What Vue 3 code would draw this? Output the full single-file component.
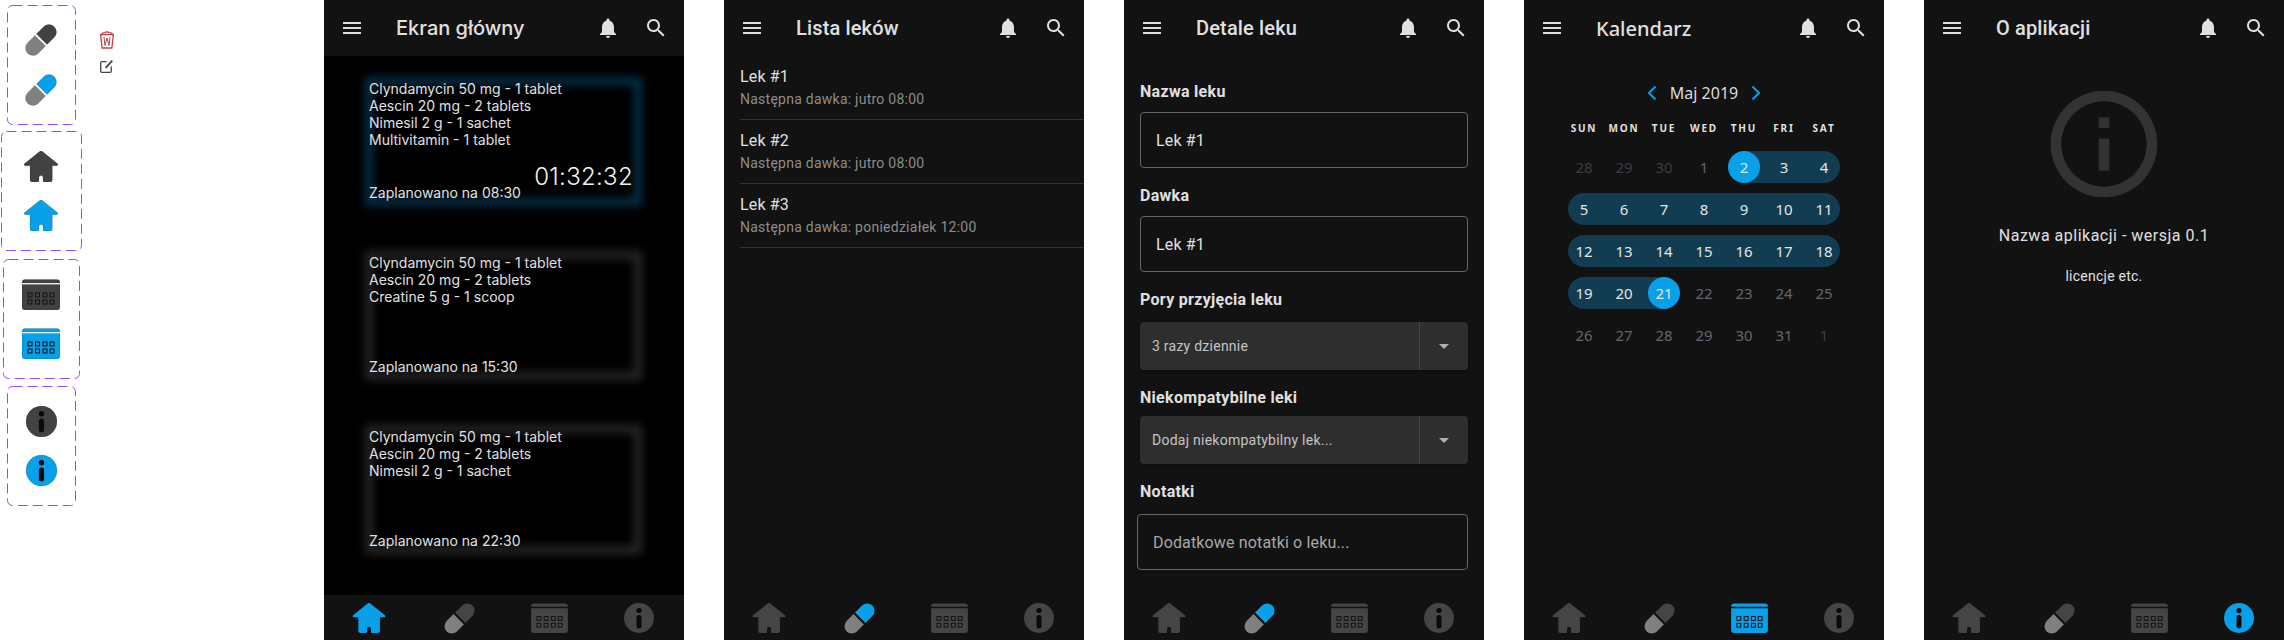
<script setup>
const palette = [
  { icon: 'pill', size: [32, 32] },
  { icon: 'home', size: [34, 31] },
  { icon: 'cal', size: [38, 31] },
  { icon: 'info', size: [31, 31] }
]

const navIcons = [
  { icon: 'home', w: 34, h: 30 },
  { icon: 'pill', w: 31, h: 31 },
  { icon: 'cal', w: 37, h: 30 },
  { icon: 'info', w: 30, h: 30 }
]

const screens = [
  { key: 'home', title: 'Ekran główny', nav: 0 },
  { key: 'list', title: 'Lista leków', nav: 1 },
  { key: 'details', title: 'Detale leku', nav: 1 },
  { key: 'calendar', title: 'Kalendarz', nav: 2 },
  { key: 'about', title: 'O aplikacji', nav: 3 }
]

const doses = [
  { lines: ['Clyndamycin 50 mg - 1 tablet', 'Aescin 20 mg - 2 tablets', 'Nimesil 2 g - 1 sachet', 'Multivitamin - 1 tablet'], time: '08:30', timer: '01:32:32' },
  { lines: ['Clyndamycin 50 mg - 1 tablet', 'Aescin 20 mg - 2 tablets', 'Creatine 5 g - 1 scoop'], time: '15:30' },
  { lines: ['Clyndamycin 50 mg - 1 tablet', 'Aescin 20 mg - 2 tablets', 'Nimesil 2 g - 1 sachet'], time: '22:30' }
]

const meds = [
  { name: 'Lek #1', next: 'Następna dawka: jutro 08:00' },
  { name: 'Lek #2', next: 'Następna dawka: jutro 08:00' },
  { name: 'Lek #3', next: 'Następna dawka: poniedziałek 12:00' }
]

const weekdays = ['SUN', 'MON', 'TUE', 'WED', 'THU', 'FRI', 'SAT']

const labels = [28, 29, 30, 1, 2, 3, 4, 5, 6, 7, 8, 9, 10, 11, 12, 13, 14, 15, 16, 17, 18, 19, 20, 21, 22, 23, 24, 25, 26, 27, 28, 29, 30, 31, 1]
const days = labels.map((n, i) => ({
  n,
  faint: i < 3 || i === 34,
  dim: i === 3 || (i > 23 && i < 34),
  band: i >= 4 && i <= 23,
  first: i % 7 === 0,
  last: i % 7 === 6,
  from: i === 4,
  to: i === 23,
  sel: i === 4 || i === 23
}))
</script>

<template>
  <div class="page">
    <svg class="defs" width="0" height="0">
      <symbol id="home" viewBox="0 0 34 31">
        <path d="M15.600.6a2 2 0 0 1 2.800 0L33.400 12.600c1 .8.5 2.200-.8 2.200H28.300V29a2 2 0 0 1-2 2H20a1 1 0 0 1-1-1v-3.500a2 2 0 0 0-4 0V30a1 1 0 0 1-1 1H8a2 2 0 0 1-2-2V14.800H1.400c-1.300 0-1.800-1.400-.8-2.200z" />
      </symbol>
      <symbol id="pill" viewBox="0 0 32 32">
        <g transform="rotate(-45 16 16)">
          <path d="M14.900 8.500H4.700a7.500 7.500 0 0 0 0 15h10.200z" fill="#808080" />
          <path d="M17.100 8.500h10.200a7.500 7.500 0 0 1 0 15H17.100z" />
        </g>
      </symbol>
      <symbol id="cal" viewBox="0 0 38 31">
        <path d="M0 4V3.500a3 3 0 0 1 3-3h32a3 3 0 0 1 3 3V4z" />
        <path d="M0 5.500h38V28a3 3 0 0 1-3 3H3a3 3 0 0 1-3-3z" />
        <g fill="none" stroke="#111" stroke-width="1">
          <rect x="6" y="14" width="4" height="4" />
          <rect x="13.500" y="14" width="4" height="4" />
          <rect x="21" y="14" width="4" height="4" />
          <rect x="28" y="14" width="4" height="4" />
          <rect x="6" y="21" width="4" height="4" />
          <rect x="13.500" y="21" width="4" height="4" />
          <rect x="21" y="21" width="4" height="4" />
          <rect x="28" y="21" width="4" height="4" />
        </g>
      </symbol>
      <symbol id="info" viewBox="0 0 30 30">
        <circle cx="15" cy="15" r="15" />
        <g fill="#0a0a0a" stroke="none">
          <circle cx="15" cy="7.500" r="2.600" />
          <rect x="12.500" y="12" width="5" height="13.500" rx="2.500" />
        </g>
      </symbol>
    </svg>

    <aside class="palette">
      <div v-for="p in palette" :key="p.icon" class="variants">
        <svg class="dash"><rect x="0.5" y="0.5" rx="5" /></svg>
        <svg class="pal-icon" :width="p.size[0]" :height="p.size[1]" fill="#424242"><use :href="'#' + p.icon" /></svg>
        <svg class="pal-icon" :width="p.size[0]" :height="p.size[1]" fill="#08a0e9"><use :href="'#' + p.icon" /></svg>
      </div>
    </aside>

    <div class="tools">
      <svg width="14" height="18" viewBox="0 0 14 18" fill="none" stroke="#c23f45" stroke-width="1.300">
        <path d="M.6 3.600h12.800L11.900 17H2.100z" />
        <path d="M1.500 3.400C2 1.900 4 1.700 5 1.700 5.500.6 8.500.6 9 1.700c1 0 3 .2 3.500 1.700" />
        <path d="M4 6l1 8.500M10 6l-1 8.500M5 14.500L7 7l2 7.500" stroke-width="1" />
      </svg>
      <svg width="13" height="13" viewBox="0 0 13 13" fill="none" stroke="#444" stroke-width="1.300">
        <path d="M6.500 1.700H2a1.300 1.300 0 0 0-1.300 1.300v8A1.300 1.300 0 0 0 2 12.300h8a1.300 1.300 0 0 0 1.300-1.300V6.500" />
        <path d="M5.500 7.800L12.300.7" stroke-width="1.800" />
      </svg>
    </div>

    <div class="phones">
      <section v-for="s in screens" :key="s.key" class="phone" :class="s.key">
        <header class="appbar">
          <svg class="icon" viewBox="0 0 24 24"><path d="M3 18h18v-2H3v2zm0-5h18v-2H3v2zm0-7v2h18V6H3z" /></svg>
          <h1>{{ s.title }}</h1>
          <svg class="icon" viewBox="0 0 24 24"><path d="M12 22c1.100 0 2-.9 2-2h-4c0 1.100.9 2 2 2zm6-6v-5c0-3.070-1.630-5.640-4.500-6.320V4c0-.83-.67-1.500-1.500-1.500s-1.500.67-1.500 1.500v.68C7.640 5.360 6 7.920 6 11v5l-2 2v1h16v-1l-2-2z" /></svg>
          <svg class="icon" viewBox="0 0 24 24"><path d="M15.500 14h-.79l-.28-.27C15.410 12.590 16 11.110 16 9.500 16 5.910 13.090 3 9.500 3S3 5.910 3 9.500 5.910 16 9.500 16c1.610 0 3.090-.59 4.230-1.570l.27.28v.79l5 4.990L20.490 19l-4.990-5zm-6 0C7.010 14 5 11.990 5 9.500S7.010 5 9.500 5 14 7.010 14 9.500 11.990 14 9.500 14z" /></svg>
        </header>

        <main class="content">
          <template v-if="s.key === 'home'">
            <article v-for="(d, i) in doses" :key="d.time" class="dose" :class="{ next: i === 0 }">
              <div>
                <p v-for="l in d.lines" :key="l">{{ l }}</p>
              </div>
              <div class="dose-foot">
                <p>Zaplanowano na {{ d.time }}</p>
                <span v-if="d.timer" class="timer">{{ d.timer }}</span>
              </div>
            </article>
          </template>

          <template v-else-if="s.key === 'list'">
            <div v-for="m in meds" :key="m.name" class="med">
              <div class="med-name">{{ m.name }}</div>
              <div class="med-next">{{ m.next }}</div>
            </div>
          </template>

          <template v-else-if="s.key === 'details'">
            <label class="lbl l1">Nazwa leku</label>
            <div class="field">Lek #1</div>
            <label class="lbl l1">Dawka</label>
            <div class="field">Lek #1</div>
            <label class="lbl l2">Pory przyjęcia leku</label>
            <div class="select">
              <span>3 razy dziennie</span>
              <i><svg width="24" height="24" viewBox="0 0 24 24"><path d="M7 10l5 5 5-5z" /></svg></i>
            </div>
            <label class="lbl l3">Niekompatybilne leki</label>
            <div class="select">
              <span>Dodaj niekompatybilny lek...</span>
              <i><svg width="24" height="24" viewBox="0 0 24 24"><path d="M7 10l5 5 5-5z" /></svg></i>
            </div>
            <label class="lbl l4">Notatki</label>
            <div class="field notes">Dodatkowe notatki o leku...</div>
          </template>

          <template v-else-if="s.key === 'calendar'">
            <div class="month">
              <svg width="12" height="16" viewBox="0 0 12 16" fill="none" stroke="#08a0e9" stroke-width="2"><path d="M9.500 1.500L3 8l6.500 6.500" /></svg>
              <span>Maj 2019</span>
              <svg width="12" height="16" viewBox="0 0 12 16" fill="none" stroke="#08a0e9" stroke-width="2"><path d="M2.500 1.500L9 8l-6.500 6.500" /></svg>
            </div>
            <div class="wd-row">
              <div v-for="w in weekdays" :key="w" class="wd">{{ w }}</div>
            </div>
            <div class="cal-grid">
              <div
                v-for="(d, i) in days"
                :key="i"
                class="day"
                :class="{ faint: d.faint, dim: d.dim, band: d.band, first: d.first, last: d.last, from: d.from, to: d.to, sel: d.sel }"
              >
                <span>{{ d.n }}</span>
              </div>
            </div>
          </template>

          <template v-else>
            <svg class="big-info" viewBox="0 0 24 24"><path d="M11 7h2v2h-2zm0 4h2v6h-2zm1-9C6.480 2 2 6.480 2 12s4.480 10 10 10 10-4.480 10-10S17.520 2 12 2zm0 18c-4.410 0-8-3.590-8-8s3.590-8 8-8 8 3.590 8 8-3.590 8-8 8z" /></svg>
            <p class="app-name">Nazwa aplikacji - wersja 0.1</p>
            <p class="app-lic">licencje etc.</p>
          </template>
        </main>

        <nav class="tabs">
          <span v-for="(n, i) in navIcons" :key="n.icon" class="tab">
            <svg :width="n.w" :height="n.h" :fill="i === s.nav ? '#08a0e9' : '#454545'"><use :href="'#' + n.icon" /></svg>
          </span>
        </nav>
      </section>
    </div>
  </div>
</template>

<style>
html, body { background: #fff; }
</style>

<style scoped>
.page {
  display: flex;
  width: 2284px;
  height: 640px;
  overflow: hidden;
  background: #fff;
  font-family: Roboto, sans-serif;
}
.defs { position: absolute; }

/* component set column on the left */
.palette {
  width: 82px;
  flex: none;
  display: flex;
  flex-direction: column;
  align-items: center;
  padding-top: 5px;
}
.variants {
  position: relative;
  width: 69px;
  height: 120px;
  display: flex;
  flex-direction: column;
  align-items: center;
  justify-content: center;
  gap: 18px;
  margin-bottom: 7px;
}
.variants:nth-child(1) { margin-bottom: 6px; }
.variants:nth-child(2) { width: 81px; margin-bottom: 8px; }
.variants:nth-child(3) { width: 77px; }
.dash { position: absolute; inset: 0; width: 100%; height: 100%; }
.dash rect {
  width: calc(100% - 1px);
  height: calc(100% - 1px);
  fill: none;
  stroke: #9747ff;
  stroke-dasharray: 10 5;
}
.pal-icon { stroke: rgba(0, 0, 0, 0.3); stroke-width: 0.5; overflow: visible; }

.tools {
  width: 14px;
  margin: 31px 210px 0 18px;
  display: flex;
  flex-direction: column;
  gap: 11px;
  align-items: flex-start;
}

.phones { display: flex; gap: 40px; }
.phone {
  width: 360px;
  height: 640px;
  display: flex;
  flex-direction: column;
  background: #121212;
  color: #e0e0e0;
}

.appbar {
  height: 56px;
  flex: none;
  display: flex;
  align-items: center;
  gap: 24px;
  padding: 0 16px;
}
.appbar h1 {
  flex: 1;
  margin: 0 0 0 8px;
  font-size: 20px;
  font-weight: 500;
  letter-spacing: 0.15px;
}
.icon { width: 24px; height: 24px; fill: #e0e0e0; flex: none; }
.home h1 { font-family: Inter, sans-serif; letter-spacing: 0; }
.calendar h1 { font-family: "Noto Sans", sans-serif; letter-spacing: 0; }

.content { flex: 1; min-height: 0; }

.home .content {
  background: #000;
  padding: 24px 0 0 45px;
  font-family: Inter, sans-serif;
}
.dose {
  position: relative;
  width: 269px;
  height: 122px;
  box-sizing: border-box;
  margin-bottom: 52px;
  padding-bottom: 1px;
  display: flex;
  flex-direction: column;
  justify-content: space-between;
  font-size: 14px;
  line-height: 17px;
  --glow: #272727;
}
.dose.next { --glow: #063049; }
.dose::before {
  content: "";
  position: absolute;
  inset: -3px -4px -4px -4px;
  border: 8px solid var(--glow);
  filter: blur(4px);
}
.dose > * { position: relative; }
.dose p { margin: 0; white-space: nowrap; }
.dose-foot {
  display: flex;
  justify-content: space-between;
  align-items: flex-end;
  padding-right: 5px;
}
.timer {
  font-size: 24px;
  line-height: 29px;
  font-weight: 300;
  letter-spacing: 0.3px;
  margin-bottom: 10px;
  color: #f2f2f2;
}

.med {
  height: 64px;
  margin-left: 16px;
  border-bottom: 1px solid #333;
  padding-top: 9px;
  box-sizing: border-box;
}
.med-name { font-size: 16px; line-height: 24px; letter-spacing: 0.15px; }
.med-next { font-size: 14px; line-height: 20px; letter-spacing: 0.25px; color: #8c8c8c; }

.details .content { padding: 24px 16px 0; }
.lbl {
  display: block;
  font-size: 16px;
  line-height: 24px;
  font-weight: 700;
  letter-spacing: 0.3px;
}
.l1 { margin: 16px 0 8px; }
.lbl:first-child { margin-top: 0; }
.l2 { margin: 16px 0 10px; }
.l3 { margin: 16px 0 6px; }
.l4 { margin: 16px 0 10px; }
.field {
  height: 56px;
  box-sizing: border-box;
  border: 1px solid #666;
  border-radius: 4px;
  padding-left: 15px;
  display: flex;
  align-items: center;
  font-size: 16px;
  letter-spacing: 0.15px;
}
.notes {
  margin-left: -3px;
  color: #a8a8a8;
}
.select {
  height: 48px;
  display: flex;
  align-items: stretch;
  background: #2e2e2e;
  border-radius: 4px;
  box-shadow: 0 1px 3px rgba(0, 0, 0, 0.4);
  font-size: 14px;
  letter-spacing: 0.25px;
  color: #c4c4c4;
}
.select span { flex: 1; padding-left: 12px; line-height: 48px; }
.select i {
  width: 48px;
  border-left: 1px solid #444;
  display: flex;
  align-items: center;
  justify-content: center;
}
.select svg { fill: #b0b0b0; }

.calendar .content {
  font-family: "Noto Sans", sans-serif;
  padding-top: 24px;
}
.month {
  height: 26px;
  display: flex;
  align-items: center;
  justify-content: center;
  gap: 12px;
  font-size: 16px;
  color: #dcdcdc;
}
.wd-row, .cal-grid {
  width: 280px;
  margin: 0 auto;
  display: grid;
  grid-template-columns: repeat(7, 40px);
}
.wd-row { margin-top: 15px; }
.wd {
  text-align: center;
  font-size: 10px;
  line-height: 14px;
  font-weight: 700;
  letter-spacing: 1.8px;
  color: #e0e0e0;
}
.cal-grid {
  margin-top: 16px;
  grid-auto-rows: 32px;
  row-gap: 10px;
}
.day {
  position: relative;
  display: flex;
  align-items: center;
  justify-content: center;
  font-size: 15px;
  color: #e6e6e6;
}
.day span { position: relative; z-index: 2; }
.day.faint { color: #3e3c44; }
.day.dim { color: #66646c; }
.day.band::before {
  content: "";
  position: absolute;
  inset: 0;
  background: #113c52;
}
.day.band.first::before { left: 4px; border-radius: 16px 0 0 16px; }
.day.band.last::before { right: 4px; border-radius: 0 16px 16px 0; }
.day.band.from::before { left: 50%; }
.day.band.to::before { right: 50%; }
.day.sel::after {
  content: "";
  position: absolute;
  left: 4px;
  top: 0;
  width: 32px;
  height: 32px;
  border-radius: 50%;
  background: #08a0e9;
}

.about .content {
  display: flex;
  flex-direction: column;
  align-items: center;
  padding-top: 24px;
  letter-spacing: 0.5px;
}
.big-info { width: 128px; height: 128px; fill: #333; }
.app-name { margin: 16px 0 0; font-size: 16px; line-height: 24px; }
.app-lic { margin: 18px 0 0; font-size: 14px; line-height: 20px; letter-spacing: 0.25px; }

.tabs {
  height: 45px;
  flex: none;
  display: grid;
  grid-template-columns: repeat(4, 90px);
  padding-top: 8px;
  box-sizing: border-box;
  background: #121212;
}
.tab { display: flex; justify-content: center; align-items: flex-start; }
</style>
